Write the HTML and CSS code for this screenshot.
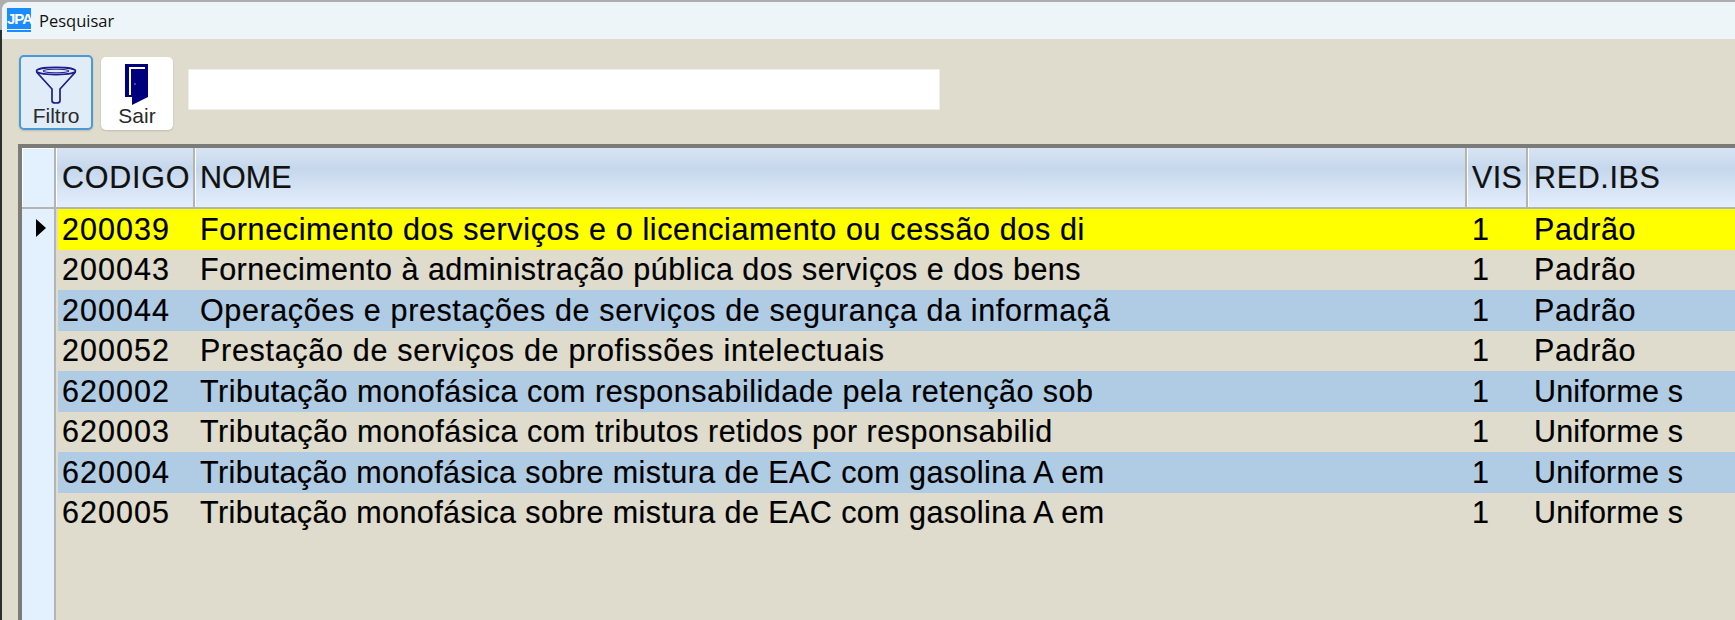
FILE: index.html
```html
<!DOCTYPE html>
<html lang="en">
<head>
    <meta charset="UTF-8">
    <meta name="viewport" content="width=device-width, initial-scale=1.0">
    <title>Pesquisar</title>
    <link rel="stylesheet" href="styles.css">
</head>
<body>
    <div class="window">
        <div class="title-bar">
            <div class="app-logo">JPA</div>
            <span class="title-text">Pesquisar</span>
        </div>

        <div class="toolbar">
            <button class="tool-btn active">
                <svg class="funnel" viewBox="0 0 42 38" width="42" height="38">
                    <ellipse cx="21" cy="5" rx="19.5" ry="3.6" fill="none" stroke="#1c1c8c" stroke-width="1.6"/>
                    <ellipse cx="21" cy="5" rx="13" ry="1.8" fill="none" stroke="#1c1c8c" stroke-width="1"/>
                    <path d="M1.5 6 L17 23 V35 Q17 37 21 37 Q25 37 25 35 V23 L40.500 6" fill="none" stroke="#1c1c8c" stroke-width="1.7"/>
                </svg>
                <span>Filtro</span>
            </button>
            <button class="tool-btn">
                <svg class="door" viewBox="0 0 24 42" width="24" height="42">
                    <path d="M0 0H23V33L7 41V33H0Z" fill="#00007f"/>
                    <path d="M5 31V4H20" fill="none" stroke="#fff" stroke-width="2"/>
                    <circle cx="10" cy="20" r="0.8" fill="#9a9ad8"/>
                </svg>
                <span>Sair</span>
            </button>
            <input type="text" class="search-input">
        </div>

        <div class="grid">
            <div class="grid-head">
                <div class="head-corner"></div>
                <div class="head-cell col-code">CODIGO</div>
                <div class="head-cell col-name">NOME</div>
                <div class="head-cell col-vis">VIS</div>
                <div class="head-cell col-red">RED.IBS</div>
            </div>
            <div class="grid-body">
                <div class="indicator-col">
                    <div class="indicator-arrow"></div>
                </div>
                <div class="rows">
                    <div class="row current">
                        <div class="col-code">200039</div>
                        <div class="col-name">Fornecimento dos serviços e o licenciamento ou cessão dos di</div>
                        <div class="col-vis">1</div>
                        <div class="col-red">Padrão</div>
                    </div>
                    <div class="row">
                        <div class="col-code">200043</div>
                        <div class="col-name tight">Fornecimento à administração pública dos serviços e dos bens</div>
                        <div class="col-vis">1</div>
                        <div class="col-red">Padrão</div>
                    </div>
                    <div class="row striped">
                        <div class="col-code">200044</div>
                        <div class="col-name">Operações e prestações de serviços de segurança da informaçã</div>
                        <div class="col-vis">1</div>
                        <div class="col-red">Padrão</div>
                    </div>
                    <div class="row">
                        <div class="col-code">200052</div>
                        <div class="col-name wide">Prestação de serviços de profissões intelectuais</div>
                        <div class="col-vis">1</div>
                        <div class="col-red">Padrão</div>
                    </div>
                    <div class="row striped">
                        <div class="col-code">620002</div>
                        <div class="col-name tight">Tributação monofásica com responsabilidade pela retenção sob</div>
                        <div class="col-vis">1</div>
                        <div class="col-red tight">Uniforme s</div>
                    </div>
                    <div class="row">
                        <div class="col-code">620003</div>
                        <div class="col-name tight">Tributação monofásica com tributos retidos por responsabilid</div>
                        <div class="col-vis">1</div>
                        <div class="col-red tight">Uniforme s</div>
                    </div>
                    <div class="row striped">
                        <div class="col-code">620004</div>
                        <div class="col-name tighter">Tributação monofásica sobre mistura de EAC com gasolina A em</div>
                        <div class="col-vis">1</div>
                        <div class="col-red tight">Uniforme s</div>
                    </div>
                    <div class="row">
                        <div class="col-code">620005</div>
                        <div class="col-name tighter">Tributação monofásica sobre mistura de EAC com gasolina A em</div>
                        <div class="col-vis">1</div>
                        <div class="col-red tight">Uniforme s</div>
                    </div>
                </div>
            </div>
        </div>
    </div>
</body>
</html>
```

FILE: styles.css
```css
html, body {
    margin: 0;
    height: 100%;
    overflow: hidden;
}
body {
    background: linear-gradient(to bottom, #adadb0 0, #adadb0 30px, #2e2e2e 30px);
    padding: 2px 0 0 2px;
    box-sizing: border-box;
    font-family: "Liberation Sans", Arial, sans-serif;
}
.window {
    height: 100%;
    display: flex;
    flex-direction: column;
    background-color: #dfdccd;
    border-top-left-radius: 8px;
    overflow: hidden;
}
.title-bar {
    flex: 0 0 37px;
    display: flex;
    align-items: center;
    background-color: #eef5f9;
    padding: 0 0 1px 5px;
    box-sizing: border-box;
}
.app-logo {
    width: 24px;
    height: 24px;
    background-color: #1a8cff;
    color: white;
    font-size: 15px;
    font-weight: bold;
    line-height: 21px;
    text-align: center;
    letter-spacing: -1px;
    box-sizing: border-box;
    box-shadow: inset 0 -2px 0 #1a8cff, inset 0 -3px 0 white;
}
.title-text {
    margin-left: 8px;
    font-family: "Open Sans", sans-serif;
    font-size: 16.5px;
    color: #111;
}
.toolbar {
    flex: 0 0 105px;
    display: flex;
    align-items: flex-start;
    padding: 16px 0 0 16px;
    box-sizing: border-box;
}
.tool-btn {
    width: 72px;
    height: 73px;
    margin: 2px 8px 0 0;
    padding: 0;
    display: flex;
    flex-direction: column;
    align-items: center;
    background-color: white;
    border: 0;
    border-radius: 5px;
    box-shadow: 0 1px 2px rgba(0, 0, 0, 0.15);
    font-family: "Liberation Sans", Arial, sans-serif;
    font-size: 21px;
    color: #2a2a2a;
    line-height: 23px;
}
.tool-btn.active {
    width: 74px;
    height: 75px;
    margin-top: 0;
    margin-left: 1px;
    background-color: #e0ecf8;
    border: 2px solid #4a9ad6;
    box-sizing: border-box;
}
.funnel {
    margin-top: 9px;
}
.door {
    margin-top: 7px;
    margin-bottom: -2px;
}
.search-input {
    width: 752px;
    height: 41px;
    margin: 14px 0 0 7px;
    padding: 0;
    background-color: white;
    border: 1px solid #eeeeea;
    box-sizing: border-box;
    outline: none;
}
.grid {
    flex: 1;
    margin-left: 16px;
    border-top: 4px solid #7b7b78;
    border-left: 4px solid #7b7b78;
    background-color: #dfdccd;
    font-size: 30.5px;
    -webkit-text-stroke: 0.2px;
    color: black;
    display: flex;
    flex-direction: column;
}
.grid-head {
    flex: 0 0 61px;
    display: grid;
    grid-template-columns: 34px 139px 1272px 61px 1fr;
    background: linear-gradient(to bottom, #d8e4f4 0, #c6d7ec 35%, #e4effc 100%);
    border-bottom: 2px solid #b4b4b4;
    box-sizing: border-box;
    color: #111;
}
.head-corner {
    background-color: #e3f0fe;
    border-right: 2px solid #b4b4b4;
    box-shadow: inset 1px 1px 0 white;
}
.head-cell {
    display: flex;
    align-items: center;
    border-right: 2px solid #b4b4b4;
    box-shadow: inset 1px 0 0 white;
    box-sizing: border-box;
}
.head-cell.col-code {
    padding-left: 6px;
    letter-spacing: 0.75px;
}
.head-cell.col-name {
    letter-spacing: 0;
}
.head-cell.col-vis {
    letter-spacing: 0.3px;
}
.head-cell.col-red {
    border-right: 0;
    letter-spacing: 0.65px;
}
.grid-body {
    flex: 1;
    display: flex;
}
.indicator-col {
    flex: 0 0 34px;
    margin-right: 2px;
    padding-top: 10px;
    background-color: #e3f0fe;
    border-right: 2px solid #b4b4b4;
    box-sizing: border-box;
}
.indicator-arrow {
    width: 0;
    height: 0;
    margin-left: 14px;
    border-left: 10px solid black;
    border-top: 9px solid transparent;
    border-bottom: 9px solid transparent;
}
.rows {
    flex: 1;
    display: flex;
    flex-direction: column;
    min-width: 0;
}
.row {
    flex: 0 0 40.5px;
    display: grid;
    grid-template-columns: 137px 1272px 61px 1fr;
    align-items: center;
    white-space: nowrap;
    letter-spacing: 0.62px;
}
.row.current {
    background-color: yellow;
}
.row.striped {
    background-color: #b0cce4;
}
.row .col-code {
    letter-spacing: 1.05px;
}
.col-code {
    padding-left: 4px;
}
.col-name, .col-vis {
    padding-left: 5px;
}
.col-red {
    padding-left: 6px;
}
.col-name.wide {
    letter-spacing: 0.7px;
}
.col-name.tight {
    letter-spacing: 0.5px;
}
.col-name.tighter {
    letter-spacing: 0.43px;
}
.col-red.tight {
    letter-spacing: 0.18px;
}
```
